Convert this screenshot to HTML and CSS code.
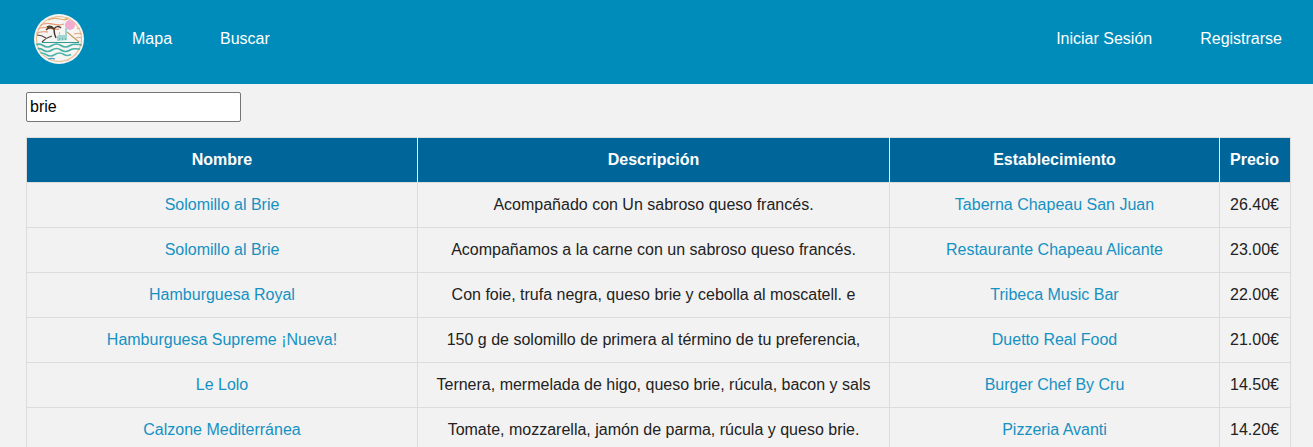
FILE: index.html
```html
<!DOCTYPE html>
<html lang="es">
<head>
<meta charset="utf-8">
<title>Buscar</title>
<link rel="stylesheet" href="styles.css">
</head>
<body>
<header class="topbar">
  <a class="logo" href="#" aria-label="Inicio">
    <svg viewBox="0 0 50 50" width="50" height="50">
      <defs><clipPath id="disc"><circle cx="25" cy="25" r="23.500"/></clipPath></defs>
      <circle cx="25" cy="25" r="25" fill="#f5f5f3"/>
      <g clip-path="url(#disc)" fill="none">
        <circle cx="25" cy="25" r="22.500" stroke="#e7bb8c" stroke-width="1.100"/>
        <path d="M14 6c4-2 8-2 12-1s6 1 8 0" stroke="#e3a974" stroke-width="1.200"/>
        <path d="M5 12c5-3 9-3 13-2s7 2 12 0" stroke="#e79e78" stroke-width="1.300"/>
        <path d="M2 16c5-3 9-3 13-2s6 2 10 1" stroke="#e9a27e" stroke-width="1.300"/>
        <path d="M1 20c4-2 8-3 13-2" stroke="#eba684" stroke-width="1.300"/>
        <circle cx="36" cy="11" r="5" fill="#f4abd0"/>
        <path d="M30 6c3-3 9-3 12 0M43 15c1-1 3-1 4 0" stroke="#e2b060" stroke-width="1.100"/>
        <path d="M40 20c3-1 5-1 8 0M42 24c2-1 4-1 6 0" stroke="#e8ad85" stroke-width="1.100"/>
        <path d="M8 28c3-3 6-5 10-6l14-6 13 12z" fill="#f5f5f3"/>
        <path d="M3 21c3 0 6 1 9 3" stroke="#574538" stroke-width="1.200"/>
        <path d="M8 28c3-3 6-5 10-6" stroke="#574538" stroke-width="1.200"/>
        <path d="M33 18l6 5 6 5" stroke="#c99a68" stroke-width="1.200"/>
        <path d="M20 15c-3-2-6-1-8 1M20 15c-2-3-5-3-7-2M20 15c2-3 5-3 7-1M20 15c0 4 1 7 2 9" stroke="#4a392b" stroke-width="1.500"/>
        <path d="M23 27v-5l2-1v-3h1v3h5v-7h2v12z" fill="#9fd5d0"/>
        <path d="M25 25h1M28 25h1M31 25h1" stroke="#3f9f98" stroke-width="1.200"/>
        <path d="M8 28.500h37" stroke="#2f9a90" stroke-width="1"/>
        <path d="M0 31.500c4-2 6-2 9 0s6 2 9 0 6-2 9 0 6 2 9 0 6-2 14 0" stroke="#45b0a6" stroke-width="1.700"/>
        <path d="M0 36c4-2 6-2 9 0s6 2 9 0 6-2 9 0 6 2 9 0 6-2 14 0" stroke="#45b0a6" stroke-width="1.700"/>
        <path d="M3 40.500c3-2 6-2 9 0s6 2 9 0 6-2 9 0 5 1 7 0" stroke="#4fb5ae" stroke-width="1.700"/>
        <path d="M14 45c3-1 5-1 7 0" stroke="#4a9fc0" stroke-width="1.300"/>
        <path d="M32 48c4-1 9-4 12-8" stroke="#574538" stroke-width="1.200"/>
      </g>
    </svg>
  </a>
  <nav class="nav">
    <a href="#">Mapa</a>
    <a href="#">Buscar</a>
  </nav>
  <nav class="nav nav-end">
    <a href="#">Iniciar Sesión</a>
    <a href="#">Registrarse</a>
  </nav>
</header>
<main class="content">
  <input class="search" type="text" value="brie">
  <table class="results">
    <colgroup>
      <col class="c-name"><col class="c-desc"><col class="c-place"><col class="c-price">
    </colgroup>
    <thead>
      <tr><th>Nombre</th><th>Descripción</th><th>Establecimiento</th><th>Precio</th></tr>
    </thead>
    <tbody>
      <tr><td><a href="#">Solomillo al Brie</a></td><td>Acompañado con Un sabroso queso francés.</td><td><a href="#">Taberna Chapeau San Juan</a></td><td>26.40€</td></tr>
      <tr><td><a href="#">Solomillo al Brie</a></td><td>Acompañamos a la carne con un sabroso queso francés.</td><td><a href="#">Restaurante Chapeau Alicante</a></td><td>23.00€</td></tr>
      <tr><td><a href="#">Hamburguesa Royal</a></td><td>Con foie, trufa negra, queso brie y cebolla al moscatell. e</td><td><a href="#">Tribeca Music Bar</a></td><td>22.00€</td></tr>
      <tr><td><a href="#">Hamburguesa Supreme ¡Nueva!</a></td><td>150 g de solomillo de primera al término de tu preferencia,</td><td><a href="#">Duetto Real Food</a></td><td>21.00€</td></tr>
      <tr><td><a href="#">Le Lolo</a></td><td>Ternera, mermelada de higo, queso brie, rúcula, bacon y sals</td><td><a href="#">Burger Chef By Cru</a></td><td>14.50€</td></tr>
      <tr><td><a href="#">Calzone Mediterránea</a></td><td>Tomate, mozzarella, jamón de parma, rúcula y queso brie.</td><td><a href="#">Pizzeria Avanti</a></td><td>14.20€</td></tr>
    </tbody>
  </table>
</main>
</body>
</html>
```
FILE: styles.css
```css
* { box-sizing: border-box; }
html, body { height: 447px; overflow: hidden; }
body {
  margin: 0;
  background: #f2f2f2;
  color: #222;
  font-family: "Liberation Sans", Arial, sans-serif;
  font-size: 16px;
}
.topbar {
  display: flex;
  align-items: center;
  height: 84px;
  padding: 0 31px 6px 34px;
  background: #008cba;
}
.logo { display: block; width: 50px; height: 50px; margin-right: 48px; }
.logo svg { display: block; }
.nav { display: flex; gap: 48px; }
.nav a { color: #fff; text-decoration: none; line-height: 18px; }
.nav-end { margin-left: auto; }
.content { padding: 8px 23px 0 26px; }
.search {
  display: block;
  width: 215px;
  height: 30px;
  margin: 0 0 15px;
  padding: 1px 3px;
  border: 1px solid #767676;
  border-radius: 2px;
  background: #fff;
  color: #000;
  font: 16px "Liberation Sans", Arial, sans-serif;
}
.results {
  width: 1264px;
  table-layout: fixed;
  border-collapse: collapse;
  background: #f2f2f2;
}
.c-name { width: 391px; }
.c-desc { width: 472px; }
.c-place { width: 330px; }
.c-price { width: 71px; }
.results th, .results td {
  height: 45px;
  padding: 0 10px;
  border: 1px solid #dcdcdc;
  text-align: center;
  white-space: nowrap;
  overflow: hidden;
}
.results th:last-child, .results td:last-child { padding-right: 11px; }
.results th {
  background: #006699;
  border-left-color: #f2f2f2;
  border-right-color: #f2f2f2;
  color: #fff;
  font-weight: 700;
}
.results th:first-child { border-left-color: #dcdcdc; }
.results th:last-child { border-right-color: #dcdcdc; }
.results a { color: #1591c2; text-decoration: none; }
```
